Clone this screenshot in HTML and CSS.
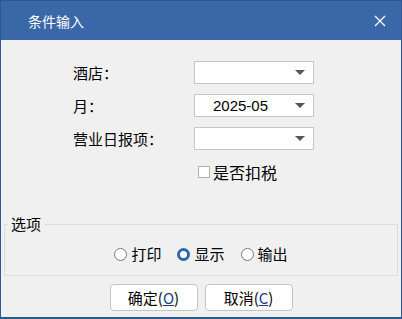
FILE: index.html
```html
<!doctype html>
<html lang="zh-CN">
<head>
    <meta charset="UTF-8">
    <title>条件输入</title>
    <link rel="stylesheet" href="styles.css">
</head>
<body>
<div class="dialog">
    <div class="titlebar">
        <span class="title">条件输入</span>
        <svg class="close" width="12" height="12" viewBox="0 0 12 12">
            <path d="M1 1L11 11M11 1L1 11" stroke="#fff" stroke-width="1.3" fill="none"/>
        </svg>
    </div>
    <div class="body">
        <div class="form">
            <label>酒店：</label>
            <div class="combo"><span></span><i class="arrow"></i></div>
            <label>月：</label>
            <div class="combo"><span>2025-05</span><i class="arrow"></i></div>
            <label>营业日报项：</label>
            <div class="combo"><span></span><i class="arrow"></i></div>
        </div>
        <div class="check-row">
            <span class="checkbox"></span>
            <span class="check-text">是否扣税</span>
        </div>
        <fieldset class="group">
            <legend>选项</legend>
            <div class="radios">
                <span class="radio"></span><span class="radio-text">打印</span>
                <span class="radio on"></span><span class="radio-text">显示</span>
                <span class="radio"></span><span class="radio-text">输出</span>
            </div>
        </fieldset>
        <div class="buttons">
            <button>确定(<u>O</u>)</button>
            <button>取消(<u>C</u>)</button>
        </div>
    </div>
</div>
</body>
</html>
```

FILE: styles.css
```css
* {
    margin: 0;
    padding: 0;
    box-sizing: border-box;
}

body {
    font-family: "Noto Sans CJK SC", "Noto Sans", sans-serif;
    font-size: 15px;
    color: #000;
    background: #f0f0f0;
}

.dialog {
    width: 402px;
    height: 319px;
    border: 1px solid #2b5797;
    border-bottom-width: 2px;
    background: #f0f0f0;
    display: flex;
    flex-direction: column;
}

.titlebar {
    height: 39px;
    background: #3a67a8;
    display: flex;
    align-items: center;
    justify-content: space-between;
    padding: 0 15px 0 27px;
    color: #fff;
}

.title {
    font-size: 14px;
    line-height: 1;
}

.body {
    flex: 1;
    padding: 21px 3px 0 3px;
    display: flex;
    flex-direction: column;
}

.form {
    display: grid;
    grid-template-columns: 121px 120px;
    grid-auto-rows: 23px;
    row-gap: 10px;
    margin-left: 69px;
    align-items: center;
    line-height: 20px;
}

.combo {
    height: 23px;
    background: #fff;
    border: 1px solid #c6c6c6;
    display: flex;
    align-items: center;
    padding: 0 8px 0 18px;
    font-family: "Liberation Sans", "Noto Sans", sans-serif;
    font-size: 15px;
}

.combo span {
    flex: 1;
}

.arrow {
    width: 0;
    height: 0;
    border-left: 5px solid transparent;
    border-right: 5px solid transparent;
    border-top: 5px solid #505a50;
}

.check-row {
    display: flex;
    align-items: center;
    gap: 3px;
    margin: 14px 0 0 194px;
    height: 16px;
}

.check-text {
    font-size: 16px;
    line-height: 16px;
}

.checkbox {
    width: 12px;
    height: 12px;
    border: 1px solid #b0b0b0;
    background: #fff;
}

.group {
    margin-top: 35px;
    border: 1px solid #dcdcdc;
    height: 61px;
    padding: 0;
}

.group legend {
    margin-left: 3px;
    padding: 0 3px;
    line-height: 18px;
}

.radios {
    display: flex;
    justify-content: center;
    align-items: center;
    margin-top: 12px;
    line-height: 18px;
}

.radio {
    width: 13px;
    height: 13px;
    border: 1px solid #7a7a7a;
    border-radius: 50%;
    background: #fff;
    margin-right: 4px;
}

.radio.on {
    border: 3.5px solid #2f66b3;
    background: #fff;
}

.radio-text {
    margin-right: 16px;
}

.radio-text:last-child {
    margin-right: 0;
}

.buttons {
    display: flex;
    justify-content: center;
    gap: 7px;
    margin-top: 8px;
}

.buttons button {
    width: 88px;
    height: 27px;
    background: #fff;
    border: 1px solid #c5c5c5;
    border-radius: 4px;
    font-family: "Noto Sans CJK SC", "Noto Sans", sans-serif;
    font-size: 15px;
    line-height: 18px;
    color: #000;
}

.buttons button u {
    color: #1a3c8c;
}
```
